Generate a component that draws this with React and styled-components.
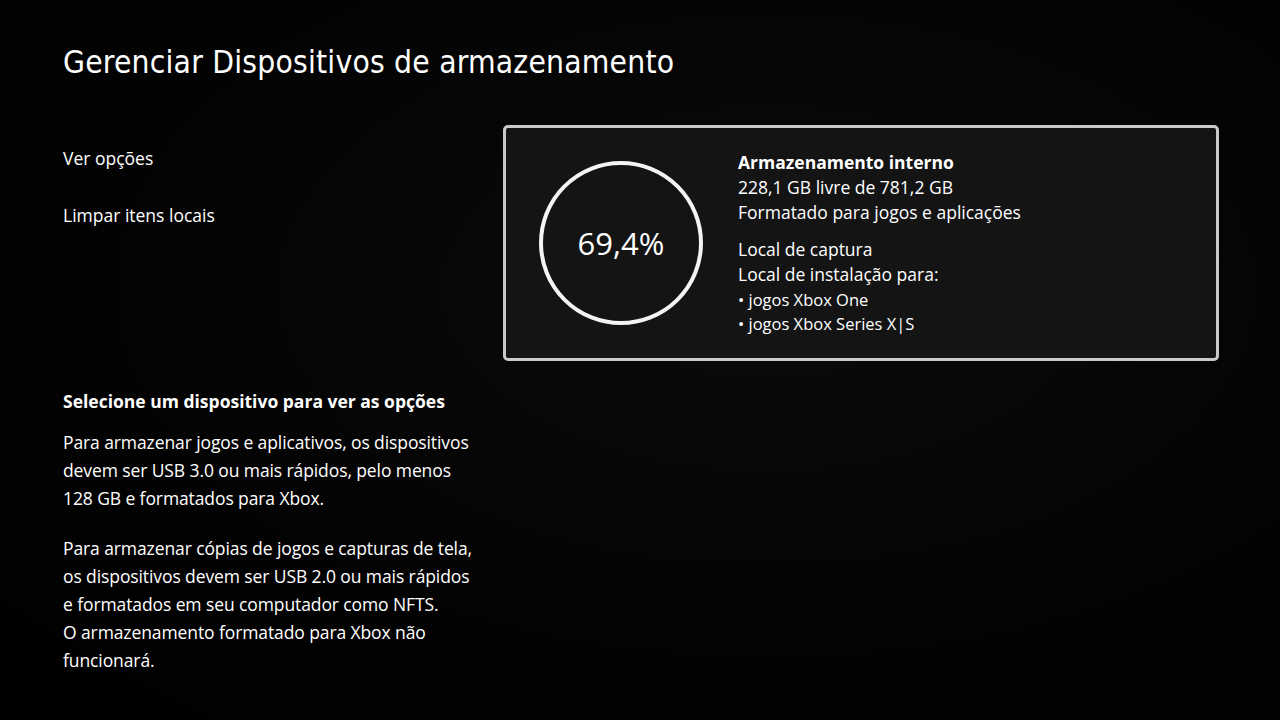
import styled, {createGlobalStyle} from "styled-components";

const GlobalStyle = createGlobalStyle`
  html, body {
    margin: 0;
    padding: 0;
    background: #000;
  }
  body {
    font-family: "Open Sans", "Noto Sans", sans-serif;
    color: #fff;
  }
`;

const Screen = styled.div`
  width: 1280px;
  height: 720px;
  box-sizing: border-box;
  padding: 42px 61px 0 63px;
  background: radial-gradient(ellipse at 60% 40%, #0b0b0b 0%, #030303 60%, #000 100%);
  overflow: hidden;
`;

const Title = styled.h1`
  margin: 0;
  font-family: "DejaVu Sans", "Roboto", sans-serif;
  font-stretch: condensed;
  font-weight: 500;
  font-size: 31.5px;
  letter-spacing: 0.2px;
  line-height: 40px;
  color: #fff;
`;

const Body = styled.div`
  display: flex;
  gap: 28px;
  margin-top: 43px;
`;

const LeftColumn = styled.div`
  width: 412px;
  display: flex;
  flex-direction: column;
`;

const Menu = styled.ul`
  list-style: none;
  margin: 20px 0 0;
  padding: 0;
  display: flex;
  flex-direction: column;
  gap: 31px;
`;

const MenuItem = styled.li`
  font-size: 17.5px;
  line-height: 26px;
`;

const Info = styled.div`
  margin-top: 160px;
`;

const InfoHeading = styled.h2`
  margin: 0 0 14px;
  font-size: 17.5px;
  font-weight: 700;
  line-height: 26px;
`;

const Paragraph = styled.p`
  margin: 0 0 22px;
  font-size: 17.5px;
  line-height: 28px;
  white-space: nowrap;
  letter-spacing: -0.1px;
`;

const Card = styled.div`
  width: 716px;
  height: 236px;
  box-sizing: border-box;
  border: 3px solid #c9c9c9;
  border-radius: 5px;
  background: #141414;
  display: flex;
  align-items: center;
  padding: 0 0 0 33px;
  gap: 35px;
`;

const Ring = styled.div`
  width: 164px;
  height: 164px;
  box-sizing: border-box;
  border: 4px solid #f4f4f4;
  border-radius: 50%;
  display: flex;
  align-items: center;
  justify-content: center;
  font-size: 31px;
  flex-shrink: 0;
`;

const Details = styled.div`
  display: flex;
  flex-direction: column;
  margin-top: -1px;
`;

const Line = styled.div`
  font-size: 17.5px;
  line-height: 25px;
  font-weight: ${p => (p.$bold ? 700 : 400)};
  margin-top: ${p => p.$gap || 0}px;
`;

const Bullet = styled.div`
  font-size: 16.5px;
  line-height: 24px;
  margin-top: ${p => p.$gap || 0}px;
`;

export default function App() {
  return (
    <>
      <GlobalStyle/>
      <Screen>
        <Title>Gerenciar Dispositivos de armazenamento</Title>
        <Body>
          <LeftColumn>
            <Menu>
              <MenuItem>Ver opções</MenuItem>
              <MenuItem>Limpar itens locais</MenuItem>
            </Menu>
            <Info>
              <InfoHeading>Selecione um dispositivo para ver as opções</InfoHeading>
              <Paragraph>
                Para armazenar jogos e aplicativos, os dispositivos<br/>
                devem ser USB 3.0 ou mais rápidos, pelo menos<br/>
                128 GB e formatados para Xbox.
              </Paragraph>
              <Paragraph>
                Para armazenar cópias de jogos e capturas de tela,<br/>
                os dispositivos devem ser USB 2.0 ou mais rápidos<br/>
                e formatados em seu computador como NFTS.<br/>
                O armazenamento formatado para Xbox não<br/>
                funcionará.
              </Paragraph>
            </Info>
          </LeftColumn>
          <div>
            <Card>
              <Ring>69,4%</Ring>
              <Details>
                <Line $bold>Armazenamento interno</Line>
                <Line>228,1 GB livre de 781,2 GB</Line>
                <Line>Formatado para jogos e aplicações</Line>
                <Line $gap={12}>Local de captura</Line>
                <Line>Local de instalação para:</Line>
                <Bullet $gap={1}>• jogos Xbox One</Bullet>
                <Bullet>• jogos Xbox Series X|S</Bullet>
              </Details>
            </Card>
          </div>
        </Body>
      </Screen>
    </>
  );
}
